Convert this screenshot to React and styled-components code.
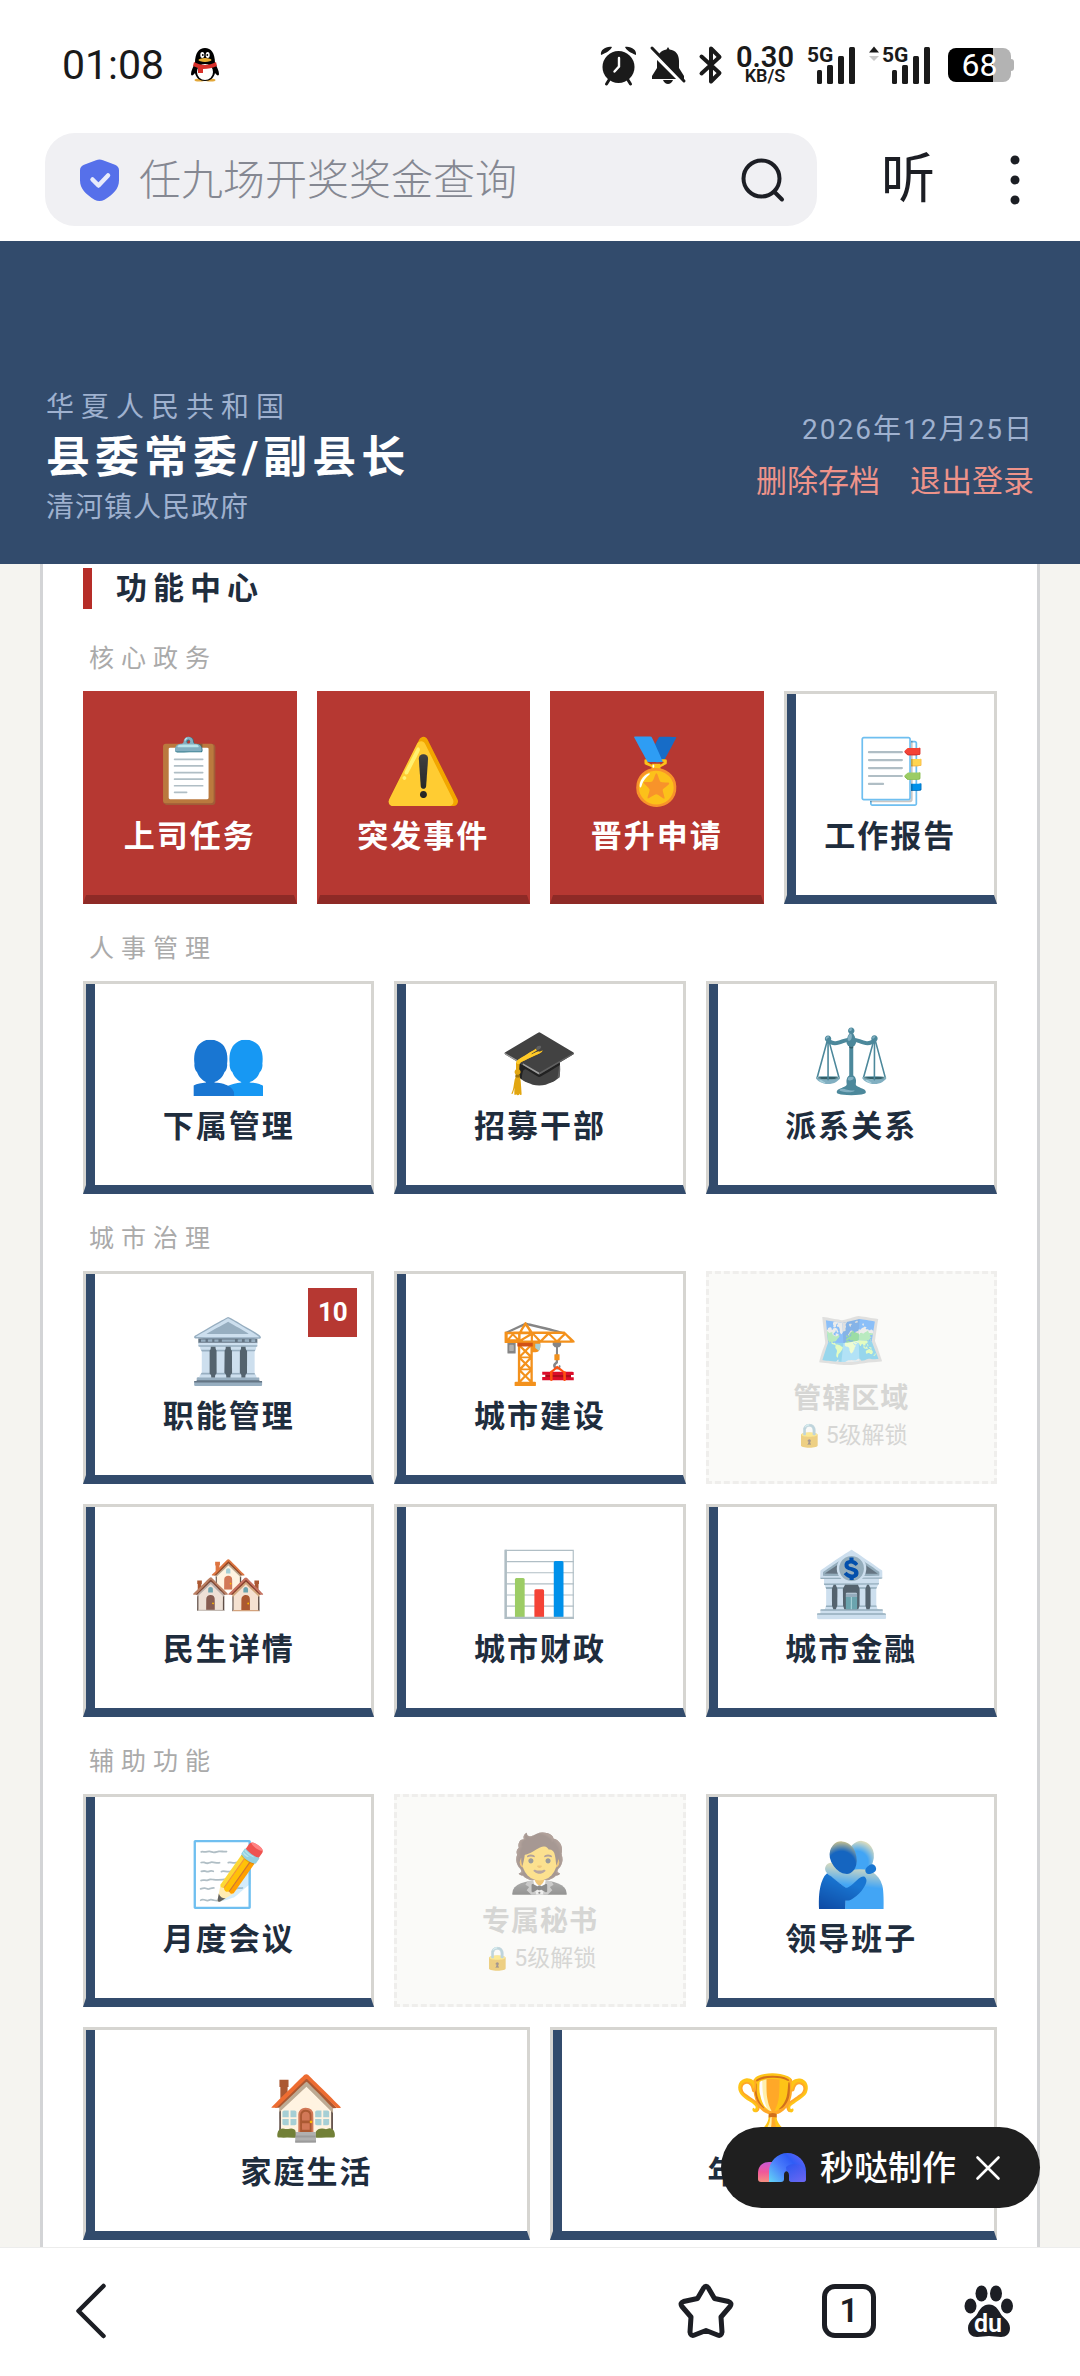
import React, { useState } from 'react';
import styled, { createGlobalStyle } from 'styled-components';

const GlobalStyle = createGlobalStyle`
  * {
    box-sizing: border-box;
  }

  body {
    margin: 0;
    background: #fff;
    font-family: Roboto, 'Noto Sans CJK SC', sans-serif;
    color: #1f2d3d;
  }

  button, input {
    font-family: inherit;
    margin: 0;
    padding: 0;
    border: none;
    background: none;
    color: inherit;
  }

  button {
    cursor: pointer;
  }

  svg {
    display: block;
    flex: none;
    overflow: visible;
  }
`;

const Page = styled.div`
  position: relative;
  display: flex;
  flex-direction: column;
  min-height: 100vh;
`;

/* ---------- status bar ---------- */

const StatusBar = styled.div`
  display: flex;
  align-items: center;
  justify-content: space-between;
  height: 133px;
  padding: 0 69px 3px 62px;
  color: #1a1a1a;
`;

const StatusGroup = styled.div`
  display: flex;
  align-items: center;
  gap: ${props => props.gap}px;
`;

const Clock = styled.span`
  font-size: 41px;
  line-height: 48px;
`;

const Speed = styled.div`
  display: flex;
  flex-direction: column;
  align-items: center;
  font-size: 18px;
  line-height: 16px;
  font-weight: 600;

  strong {
    font-size: 29px;
    line-height: 22px;
    font-weight: 600;
  }
`;

const Battery = styled.div`
  position: relative;
  display: flex;
  align-items: center;
  justify-content: center;
  width: 63px;
  height: 34px;
  margin-left: 4px;
  border-radius: 8px;
  background: linear-gradient(90deg, #000 71%, #b3b3b3 71%);
  color: #fff;
  font-size: 32px;
  line-height: 34px;

  &::after {
    content: '';
    position: absolute;
    right: -3px;
    top: 11px;
    width: 3px;
    height: 12px;
    border-radius: 0 3px 3px 0;
    background: #b3b3b3;
  }
`;

/* ---------- address bar ---------- */

const AddressBar = styled.div`
  display: flex;
  align-items: center;
  padding: 0 60px 15px 45px;
  color: #1c1e24;
`;

const SearchBox = styled.label`
  flex: 1;
  min-width: 0;
  display: flex;
  align-items: center;
  height: 93px;
  padding: 0 32px 0 35px;
  border-radius: 30px;
  background: #f0f0f3;
`;

const SearchInput = styled.input`
  flex: 1;
  min-width: 0;
  height: 60px;
  padding: 2px 0 0 20px;
  font-size: 42px;
  font-weight: 300;
  outline: none;

  &::placeholder {
    color: #858892;
    opacity: 1;
  }
`;

const ListenButton = styled.button`
  margin: 0 75px 0 64px;
  font-size: 54px;
  line-height: 60px;
  font-weight: 400;
`;

/* ---------- game header ---------- */

const Header = styled.header`
  display: flex;
  align-items: flex-end;
  justify-content: space-between;
  height: 323px;
  padding: 0 46px 36px;
  background: #324b6c;
  color: #9fb1cf;
`;

const Country = styled.p`
  margin: 0;
  font-size: 28px;
  line-height: 40px;
  letter-spacing: 7px;
`;

const Post = styled.h1`
  margin: 0;
  font-size: 44px;
  line-height: 60px;
  font-weight: 700;
  letter-spacing: 5px;
  color: #fff;
`;

const Unit = styled.p`
  margin: 0;
  font-size: 28px;
  line-height: 40px;
  letter-spacing: 1px;
`;

const HeaderSide = styled.div`
  display: flex;
  flex-direction: column;
  align-items: flex-end;
  gap: 12px;
  padding-bottom: 26px;
`;

const GameDate = styled.time`
  font-size: 28px;
  line-height: 40px;
  letter-spacing: 2px;
`;

const HeaderActions = styled.div`
  display: flex;
  gap: 30px;
`;

const HeaderAction = styled.button`
  color: #ee938a;
  font-size: 31px;
  line-height: 40px;
`;

/* ---------- function center ---------- */

const Body = styled.main`
  flex: 1;
  display: flex;
  padding: 0 40px;
  background: #f5f4f0;
`;

const Panel = styled.section`
  flex: 1;
  padding: 4px 40px 6px;
  border: solid #d3d4d6;
  border-width: 0 3px;
  background: #fff;
`;

const PanelTitle = styled.h2`
  margin: 0 0 5px;
  padding-left: 24px;
  border-left: 9px solid #b62d28;
  font-size: 31px;
  line-height: 41px;
  font-weight: 700;
  letter-spacing: 6px;
`;

const GroupTitle = styled.h3`
  margin: 0;
  padding: 26px 6px 13px;
  font-size: 25px;
  line-height: 38px;
  font-weight: 400;
  letter-spacing: 7px;
  color: #aaa;
`;

const Rows = styled.div`
  display: grid;
  gap: 20px;
`;

const Row = styled.div`
  display: grid;
  grid-template-columns: repeat(${props => props.cols}, 1fr);
  gap: 20px;
`;

const Tile = styled.button`
  position: relative;
  display: flex;
  flex-direction: column;
  align-items: center;
  justify-content: center;
  gap: 6px;
  height: 213px;
  border: 3px solid #d6d5d1;
  border-bottom: 9px solid #324b6c;
  box-shadow: inset 9px 0 0 #324b6c;
  background: #fff;
  color: #1f2d3d;
`;

const UrgentTile = styled(Tile)`
  border-color: #b63832;
  border-bottom-color: #8e2a26;
  box-shadow: none;
  background: #b63832;
  color: #fff;
`;

const LockedTile = styled(Tile)`
  gap: 3px;
  border: 3px dashed #efeeec;
  box-shadow: none;
  background: #fafaf8;
  color: #d6d6d4;
  cursor: not-allowed;
`;

const TileIcon = styled.span`
  font-family: 'Noto Color Emoji', sans-serif;
  font-size: 63px;
  line-height: 78px;

  ${LockedTile} & {
    font-size: 57px;
    line-height: 70px;
    opacity: 0.5;
  }
`;

const TileLabel = styled.span`
  font-size: 31px;
  line-height: 40px;
  font-weight: 700;
  letter-spacing: 2px;

  ${LockedTile} & {
    font-size: 28px;
    letter-spacing: 1px;
  }
`;

const LockNote = styled.span`
  display: flex;
  gap: 2px;
  font-size: 23px;
  line-height: 28px;
`;

const LockIcon = styled.span`
  font-family: 'Noto Color Emoji', sans-serif;
  opacity: 0.5;
`;

const Badge = styled.span`
  position: absolute;
  top: 14px;
  right: 14px;
  width: 49px;
  height: 49px;
  background: #b63832;
  color: #fff;
  font-size: 26px;
  line-height: 49px;
  font-weight: 700;
  text-align: center;
`;

/* ---------- floating badge and bottom bar ---------- */

const MadeWith = styled.div`
  position: absolute;
  right: 40px;
  bottom: 168px;
  display: flex;
  align-items: center;
  height: 81px;
  padding: 0 40px 0 37px;
  border-radius: 41px;
  background: #1f1f1f;
  color: #fff;
`;

const MadeWithText = styled.span`
  padding: 0 20px 0 14px;
  font-size: 34px;
  line-height: 48px;
  font-weight: 500;
`;

const BottomBar = styled.nav`
  display: flex;
  align-items: center;
  gap: 88px;
  height: 129px;
  padding: 0 66px 2px 72px;
  border-top: 1px solid #ececec;
  background: #fff;
  color: #1c1e24;
`;

const BackButton = styled.button`
  margin-right: auto;
`;

const TabCount = styled.button`
  width: 54px;
  height: 54px;
  border: 5px solid #1c1e24;
  border-radius: 13px;
  font-size: 33px;
  line-height: 44px;
  font-weight: 600;
`;

/* ---------- data ---------- */

const grupos = [
  {
    titulo: '核心政务',
    linhas: [
      [
        { icon: '📋', nome: '上司任务', urgente: true },
        { icon: '⚠️', nome: '突发事件', urgente: true },
        { icon: '🏅', nome: '晋升申请', urgente: true },
        { icon: '📑', nome: '工作报告' },
      ],
    ],
  },
  {
    titulo: '人事管理',
    linhas: [
      [
        { icon: '👥', nome: '下属管理' },
        { icon: '🎓', nome: '招募干部' },
        { icon: '⚖️', nome: '派系关系' },
      ],
    ],
  },
  {
    titulo: '城市治理',
    linhas: [
      [
        { icon: '🏛️', nome: '职能管理', badge: 10 },
        { icon: '🏗️', nome: '城市建设' },
        { icon: '🗺️', nome: '管辖区域', nivel: 5 },
      ],
      [
        { icon: '🏘️', nome: '民生详情' },
        { icon: '📊', nome: '城市财政' },
        { icon: '🏦', nome: '城市金融' },
      ],
    ],
  },
  {
    titulo: '辅助功能',
    linhas: [
      [
        { icon: '📝', nome: '月度会议' },
        { icon: '🤵', nome: '专属秘书', nivel: 5 },
        { icon: '🫂', nome: '领导班子' },
      ],
      [
        { icon: '🏠', nome: '家庭生活' },
        { icon: '🏆', nome: '年度考核' },
      ],
    ],
  },
];

/* ---------- icons ---------- */

function PenguinIcon() {
  return (
    <svg width="28" height="34" viewBox="0 0 28 34">
      <ellipse cx="8.500" cy="32" rx="5" ry="1.600" fill="#e3a83a" />
      <ellipse cx="19.500" cy="32" rx="5" ry="1.600" fill="#e3a83a" />
      <path d="M4 15C4 5 8 0 14 0s10 5 10 15c2 4 4 8 4 11 0 2-2 2-4-1-1 5-5 8-10 8S5 30 4 25c-2 3-4 3-4 1 0-3 2-7 4-11z" fill="#000" />
      <ellipse cx="14" cy="24" rx="8" ry="8" fill="#fff" />
      <path d="M3 14c7 4 15 4 22 0l1 4c-4 2-9 3-14 3v4H7v-5l-5-2z" fill="#d8302a" />
      <ellipse cx="11.300" cy="7" rx="2" ry="3" fill="#fff" />
      <ellipse cx="16.700" cy="7" rx="2" ry="3" fill="#fff" />
      <circle cx="11.800" cy="7" r="0.900" fill="#000" />
      <circle cx="16.300" cy="7" r="0.900" fill="#000" />
      <ellipse cx="14" cy="12" rx="6.500" ry="1.900" fill="#e8ae33" />
    </svg>
  );
}

function AlarmIcon() {
  return (
    <svg width="37" height="39" viewBox="0 0 37 39">
      <path d="M1 9C0 4 6 0 12 1c-1 3-6 6-11 8zM36 9c1-5-5-9-11-8 1 3 6 6 11 8z" fill="currentColor" />
      <path d="M9 34l-2.500 4M28 34l2.500 4" stroke="currentColor" strokeWidth="3" strokeLinecap="round" />
      <circle cx="18.500" cy="21" r="16" fill="currentColor" />
      <path d="M19 12v8.500l-4.500 5" stroke="#fff" strokeWidth="2.400" fill="none" strokeLinecap="round" />
    </svg>
  );
}

function MutedIcon() {
  return (
    <svg width="36" height="37" viewBox="0 0 36 37">
      <path d="M18 0l1.500 2.500C26 3 29 8 29 14v7l5 8v3H2v-3l5-8v-7C7 8 11 3 16.500 2.500z" fill="currentColor" />
      <path d="M13 33h10c-1 2.500-3 4-5 4s-4-1.500-5-4z" fill="currentColor" />
      <path d="M0 3l31 31" stroke="#fff" strokeWidth="4" />
      <path d="M2 1l32 33" stroke="currentColor" strokeWidth="3" strokeLinecap="round" />
    </svg>
  );
}

function BluetoothIcon() {
  return (
    <svg width="24" height="38" viewBox="0 0 24 38">
      <path d="M2.500 10.500L20.500 27 12 35.500v-33l8.500 8.500L2.500 27.500" stroke="currentColor" strokeWidth="4" fill="none" strokeLinejoin="round" strokeLinecap="round" />
    </svg>
  );
}

function SignalIcon({ arrows }) {
  return (
    <svg width={arrows ? 62 : 49} height="38" viewBox={arrows ? '-13 0 62 38' : '0 0 49 38'}>
      {arrows && <path d="M-13 6.500l5-6 5 6z" fill="currentColor" />}
      {arrows && <path d="M-13 10l5 5 5-5z" fill="#c8c8c8" />}
      <text x="0" y="16" fontSize="21" fontWeight="700" fontFamily="Roboto, sans-serif" fill="currentColor">5G</text>
      <rect x="10" y="24" width="5" height="14" rx="1.500" fill="currentColor" />
      <rect x="20" y="19" width="6" height="19" rx="1.500" fill="currentColor" />
      <rect x="31" y="10" width="6" height="28" rx="1.500" fill="currentColor" />
      <rect x="42" y="1" width="6" height="37" rx="1.500" fill="currentColor" />
    </svg>
  );
}

function ShieldIcon() {
  return (
    <svg width="39" height="42" viewBox="0 0 39 42">
      <path d="M16 1.200q3.500-1.500 7 0l12 4.500q4 1.500 4 5.500v10c0 9-6 14-14.500 19.500q-5 2.500-10 0C6 35 0 30 0 21.200v-10q0-4 4-5.500z" fill="#5670ea" />
      <path d="M12.500 20.500l6 6 9.500-10" stroke="#e8ebfb" strokeWidth="4.500" fill="none" strokeLinecap="round" strokeLinejoin="round" />
    </svg>
  );
}

function SearchIcon() {
  return (
    <svg width="44" height="44" viewBox="0 0 44 44" fill="none" stroke="currentColor" strokeWidth="4" strokeLinecap="round">
      <circle cx="20.500" cy="20.500" r="18" />
      <path d="M33.500 34l7.500 7.500" />
    </svg>
  );
}

function MoreIcon() {
  return (
    <svg width="10" height="50" viewBox="0 0 10 50" fill="currentColor">
      <circle cx="5" cy="5" r="4.500" />
      <circle cx="5" cy="25" r="4.500" />
      <circle cx="5" cy="45" r="4.500" />
    </svg>
  );
}

function ArchLogo() {
  return (
    <svg width="48" height="30" viewBox="0 0 48 30">
      <defs>
        <linearGradient id="arcoRosa" x1="0" y1="0" x2="0" y2="1">
          <stop offset="0" stopColor="#c95ad8" />
          <stop offset="0.500" stopColor="#f0589a" />
          <stop offset="1" stopColor="#f58f80" />
        </linearGradient>
        <linearGradient id="arcoAzul" x1="0" y1="1" x2="1" y2="0.300">
          <stop offset="0" stopColor="#63d6f5" />
          <stop offset="0.450" stopColor="#4a7dfb" />
          <stop offset="0.750" stopColor="#2f5cf6" />
          <stop offset="1" stopColor="#5a62f5" />
        </linearGradient>
        <linearGradient id="arcoRoxo" x1="0" y1="0" x2="1" y2="1">
          <stop offset="0" stopColor="#2453ee" />
          <stop offset="1" stopColor="#7d66f0" />
        </linearGradient>
      </defs>
      <path d="M0 20C0 13 5 9 11 9h6v20H3q-3 0-3-3z" fill="url(#arcoRosa)" />
      <path d="M11 29V18.500a18.500 18.500 0 0 1 37 0V26q0 3-3 3H34q-3 0-3-3v-4c0-5-5-5-5 0v4q0 3-3 3z" fill="url(#arcoAzul)" />
      <path d="M28 14c4-4 12-4 16 0 3 3 4 6 4 12q0 3-3 3H34q-3 0-3-3v-4q0-4-2.500-4z" fill="url(#arcoRoxo)" opacity="0.800" />
    </svg>
  );
}

function CloseIcon() {
  return (
    <svg width="24" height="24" viewBox="0 0 24 24" stroke="currentColor" strokeWidth="2.600" strokeLinecap="round">
      <path d="M1.500 1.500l21 21M22.500 1.500l-21 21" />
    </svg>
  );
}

function BackIcon() {
  return (
    <svg width="38" height="58" viewBox="0 0 38 58" fill="none" stroke="currentColor" strokeWidth="4.500" strokeLinecap="round" strokeLinejoin="round">
      <path d="M31.500 4L6.500 29l25 25" />
    </svg>
  );
}

function StarIcon() {
  return (
    <svg width="56" height="56" viewBox="0 0 56 56" fill="none" stroke="currentColor" strokeWidth="5" strokeLinejoin="round">
      <path d="M25.500 5.200Q28 1.500 30.500 5.200L36.500 15.500 50.500 18.500Q54.500 20 52 23.500L43 34 44 49Q43.500 53.500 39.500 52L28 47.500 16.500 52Q12.500 53.500 12 49L13 34 4 23.500Q1.500 20 5.500 18.500L19.500 15.500z" />
    </svg>
  );
}

function PawIcon() {
  return (
    <svg width="50" height="54" viewBox="0 0 50 54" fill="currentColor">
      <ellipse cx="17.500" cy="9.500" rx="6" ry="8" />
      <ellipse cx="32" cy="9.500" rx="6" ry="8" />
      <ellipse cx="6.500" cy="22" rx="6" ry="7.500" />
      <ellipse cx="43" cy="22" rx="6" ry="7.500" />
      <path d="M25 20.500c6 0 9 4.500 11.500 9S46 37 46 44c0 6-4 9-9 9-4 0-8-1-12-1s-8 1-12 1c-5 0-9-3-9-9 0-7 7-10 9.500-14.500S19 20.500 25 20.500z" />
      <text x="24" y="48" fontSize="25" fontWeight="600" fontFamily="Roboto, sans-serif" textAnchor="middle" fill="#fff">du</text>
    </svg>
  );
}

function FuncTile({ item }) {
  if (item.nivel) {
    return (
      <LockedTile type="button" disabled>
        <TileIcon>{item.icon}</TileIcon>
        <TileLabel>{item.nome}</TileLabel>
        <LockNote>
          <LockIcon>🔒</LockIcon>
          {item.nivel}级解锁
        </LockNote>
      </LockedTile>
    );
  }

  const Box = item.urgente ? UrgentTile : Tile;
  return (
    <Box type="button">
      <TileIcon>{item.icon}</TileIcon>
      <TileLabel>{item.nome}</TileLabel>
      {item.badge && <Badge>{item.badge}</Badge>}
    </Box>
  );
}

export default function App() {
  const [busca, setBusca] = useState('');
  const [avisoAberto, setAvisoAberto] = useState(true);

  return (
    <>
      <GlobalStyle />
      <Page>
        <StatusBar>
          <StatusGroup gap={27}>
            <Clock>01:08</Clock>
            <PenguinIcon />
          </StatusGroup>
          <StatusGroup gap={13}>
            <AlarmIcon />
            <MutedIcon />
            <BluetoothIcon />
            <Speed>
              <strong>0.30</strong>
              KB/S
            </Speed>
            <SignalIcon />
            <SignalIcon arrows />
            <Battery>68</Battery>
          </StatusGroup>
        </StatusBar>

        <AddressBar>
          <SearchBox>
            <ShieldIcon />
            <SearchInput
              type="text"
              aria-label="搜索"
              placeholder="任九场开奖奖金查询"
              value={busca}
              onChange={e => setBusca(e.target.value)}
            />
            <SearchIcon />
          </SearchBox>
          <ListenButton type="button">听</ListenButton>
          <button type="button" aria-label="更多"><MoreIcon /></button>
        </AddressBar>

        <Header>
          <div>
            <Country>华夏人民共和国</Country>
            <Post>县委常委/副县长</Post>
            <Unit>清河镇人民政府</Unit>
          </div>
          <HeaderSide>
            <GameDate>2026年12月25日</GameDate>
            <HeaderActions>
              <HeaderAction type="button">删除存档</HeaderAction>
              <HeaderAction type="button">退出登录</HeaderAction>
            </HeaderActions>
          </HeaderSide>
        </Header>

        <Body>
          <Panel>
            <PanelTitle>功能中心</PanelTitle>
            {grupos.map(grupo => (
              <div key={grupo.titulo}>
                <GroupTitle>{grupo.titulo}</GroupTitle>
                <Rows>
                  {grupo.linhas.map((linha, i) => (
                    <Row key={i} cols={linha.length}>
                      {linha.map(item => (
                        <FuncTile key={item.nome} item={item} />
                      ))}
                    </Row>
                  ))}
                </Rows>
              </div>
            ))}
          </Panel>
        </Body>

        {avisoAberto && (
          <MadeWith>
            <ArchLogo />
            <MadeWithText>秒哒制作</MadeWithText>
            <button type="button" aria-label="关闭" onClick={() => setAvisoAberto(false)}>
              <CloseIcon />
            </button>
          </MadeWith>
        )}

        <BottomBar>
          <BackButton type="button" aria-label="返回"><BackIcon /></BackButton>
          <button type="button" aria-label="收藏"><StarIcon /></button>
          <TabCount type="button">1</TabCount>
          <button type="button" aria-label="首页"><PawIcon /></button>
        </BottomBar>
      </Page>
    </>
  );
}
